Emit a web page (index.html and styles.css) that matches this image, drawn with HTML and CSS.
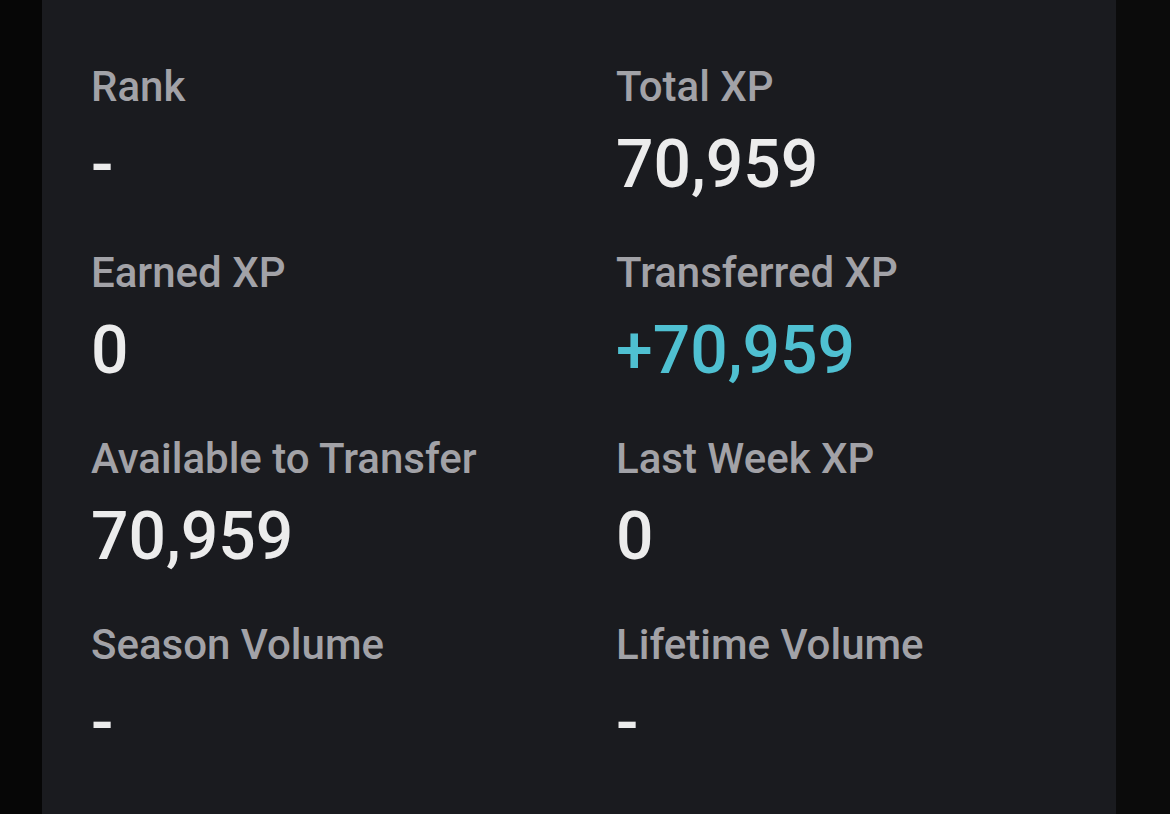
FILE: index.html
```html
<!DOCTYPE html>
<html>
<head>
<meta charset="utf-8">
<link rel="stylesheet" href="styles.css">
</head>
<body>
<div class="screen">
  <div class="side side-left"></div>
  <main class="panel">
    <div class="stats">
      <div class="stat"><div class="label">Rank</div><div class="value">-</div></div>
      <div class="stat"><div class="label">Total XP</div><div class="value">70,959</div></div>
      <div class="stat"><div class="label">Earned XP</div><div class="value">0</div></div>
      <div class="stat"><div class="label">Transferred XP</div><div class="value value-accent">+70,959</div></div>
      <div class="stat"><div class="label">Available to Transfer</div><div class="value">70,959</div></div>
      <div class="stat"><div class="label">Last Week XP</div><div class="value">0</div></div>
      <div class="stat"><div class="label">Season Volume</div><div class="value">-</div></div>
      <div class="stat"><div class="label">Lifetime Volume</div><div class="value">-</div></div>
    </div>
  </main>
  <div class="side side-right"></div>
</div>
</body>
</html>
```

FILE: styles.css
```css
* { box-sizing: border-box; }
html, body {
  margin: 0;
  padding: 0;
  height: 100%;
  background: #0a0a0a;
  font-family: Roboto, "Noto Sans", sans-serif;
}
.screen {
  display: flex;
  width: 1170px;
  height: 814px;
  overflow: hidden;
}
.side-left { width: 42px; background: #060606; }
.side-right { flex: 1; background: #0b0b0b; }
.panel {
  width: 1074px;
  background: #1a1b1f;
  padding: 59px 0 0 49px;
}
.stats {
  display: grid;
  grid-template-columns: 525px 1fr;
  row-gap: 31px;
}
.stat {
  display: flex;
  flex-direction: column;
}
.label {
  font-size: 42px;
  font-weight: 500;
  line-height: 56px;
  color: #a2a2a7;
}
.value {
  font-size: 66px;
  font-weight: 500;
  line-height: 99px;
  color: #ececec;
}
.value-accent { color: #4fc0d1; }
```
